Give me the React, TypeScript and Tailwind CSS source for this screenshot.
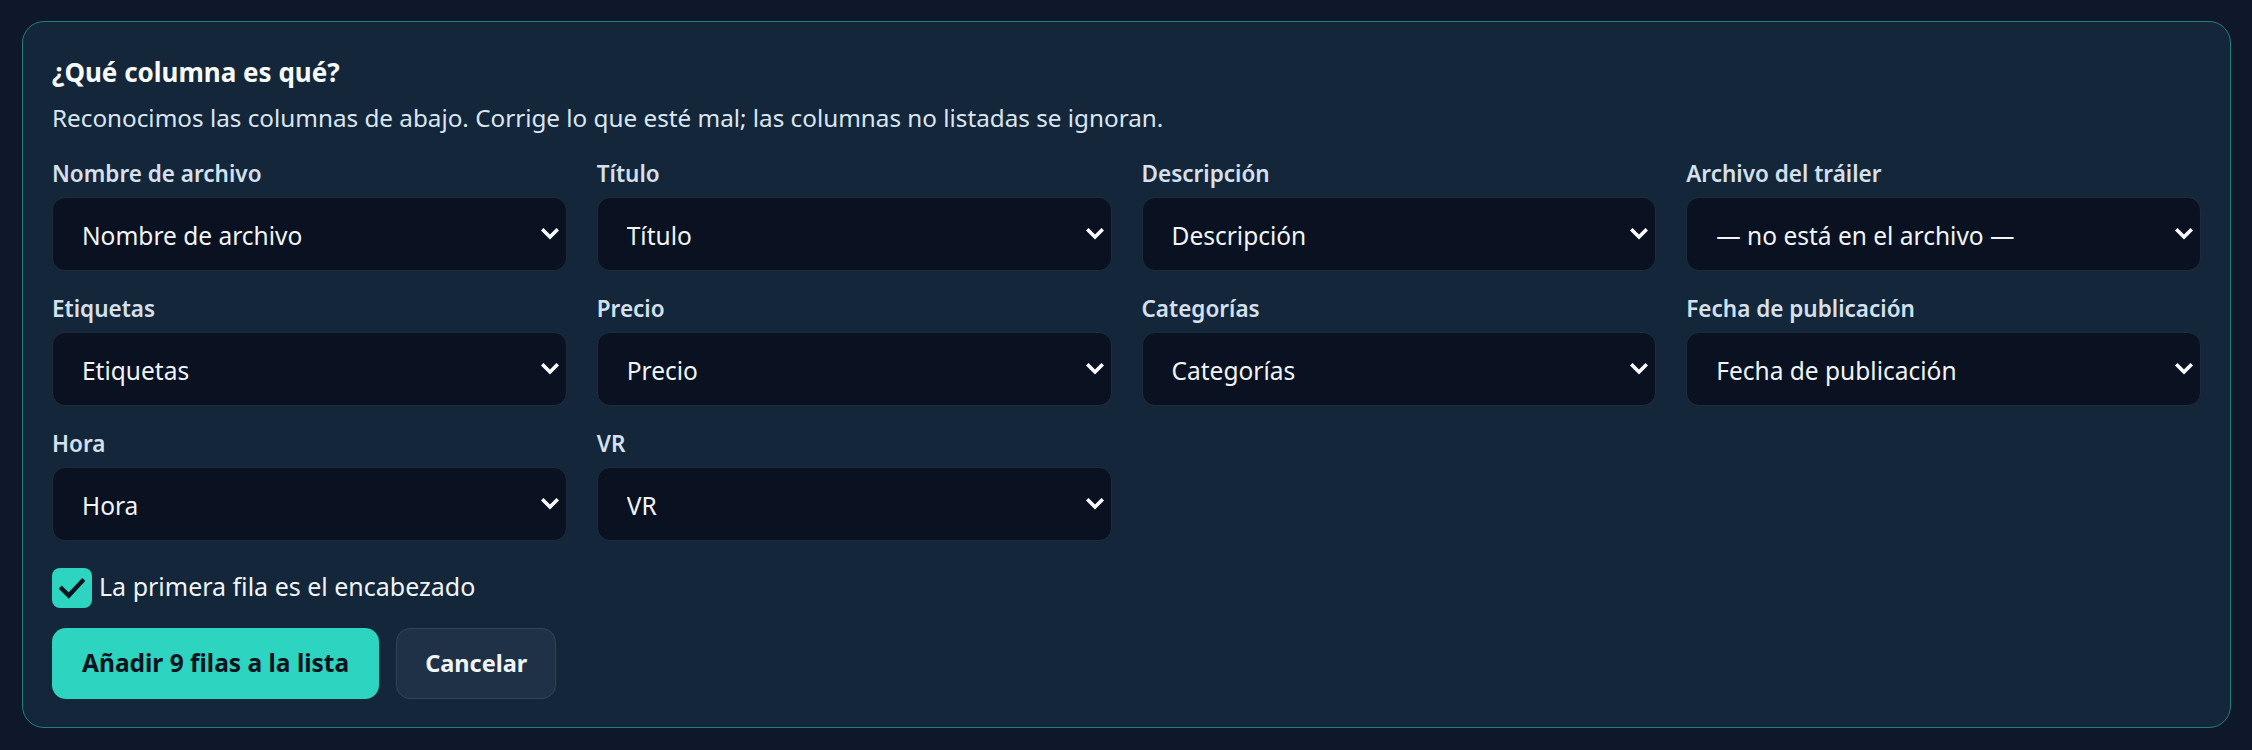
import { useState } from 'react'

const FIELDS = [
  { label: 'Nombre de archivo', value: 'Nombre de archivo' },
  { label: 'Título', value: 'Título' },
  { label: 'Descripción', value: 'Descripción' },
  { label: 'Archivo del tráiler', value: '— no está en el archivo —' },
  { label: 'Etiquetas', value: 'Etiquetas' },
  { label: 'Precio', value: 'Precio' },
  { label: 'Categorías', value: 'Categorías' },
  { label: 'Fecha de publicación', value: 'Fecha de publicación' },
  { label: 'Hora', value: 'Hora' },
  { label: 'VR', value: 'VR' },
]

const OPTIONS = [
  '— no está en el archivo —',
  'Nombre de archivo',
  'Título',
  'Descripción',
  'Etiquetas',
  'Precio',
  'Categorías',
  'Fecha de publicación',
  'Hora',
  'VR',
]

function Chevron() {
  return (
    <svg className="pointer-events-none absolute right-[8px] top-1/2 -translate-y-1/2 w-[18px] h-[12px]" viewBox="0 0 18 12" fill="none">
      <path d="M2.5 2.5 L9 9 L15.5 2.5" stroke="#f8fafc" strokeWidth="3.6" strokeLinecap="square" />
    </svg>
  )
}

function ColumnSelect({ label, value }: { label: string; value: string }) {
  const [v, setV] = useState(value)
  return (
    <label className="flex flex-col">
      <span className="text-[22.5px] leading-[28px] font-semibold text-[#d6e0ee]">{label}</span>
      <div className="relative mt-[9px]">
        <select
          value={v}
          onChange={(e) => setV(e.target.value)}
          className="w-full h-[74px] appearance-none rounded-[13px] border border-[#1f2b3d] bg-[#0a1120] pl-[29px] pr-[40px] pt-[5px] text-[24.5px] text-[#f1f5f9] outline-none"
        >
          {OPTIONS.map((o) => (
            <option key={o} value={o}>{o}</option>
          ))}
        </select>
        <Chevron />
      </div>
    </label>
  )
}

export default function App() {
  const [header, setHeader] = useState(true)

  return (
    <div className="min-h-screen bg-[#0f172b] pt-[21px] pl-[22px] pr-[21px] font-['Noto_Sans',sans-serif]">
      <div className="rounded-[22px] border border-[#21807c] bg-[#13263a] px-[29px] pt-[29px] pb-[28px]">
        <h2 className="text-[26px] leading-[42px] font-bold text-[#f8fafc]">¿Qué columna es qué?</h2>
        <p className="mt-[9px] text-[24.25px] leading-[32px] text-[#dce6f3]">
          Reconocimos las columnas de abajo. Corrige lo que esté mal; las columnas no listadas se ignoran.
        </p>

        <div className="mt-[26px] grid grid-cols-4 gap-x-[30px] gap-y-[24px]">
          {FIELDS.map((f) => (
            <ColumnSelect key={f.label} label={f.label} value={f.value} />
          ))}
        </div>

        <label className="mt-[27px] flex items-center gap-[7px] cursor-pointer w-fit">
          <button
            type="button"
            onClick={() => setHeader(!header)}
            className="w-[40px] h-[40px] rounded-[8px] bg-[#2dd4bf] flex items-center justify-center"
          >
            {header && (
              <svg viewBox="0 0 24 20" className="w-[26px] h-[22px]" fill="none">
                <path d="M2.5 10.5 L9 17 L21.5 3.5" stroke="#0b1220" strokeWidth="4" strokeLinecap="square" />
              </svg>
            )}
          </button>
          <span className="pb-[5px] text-[25px] leading-[32px] text-[#f1f5f9]">La primera fila es el encabezado</span>
        </label>

        <div className="mt-[20px] flex gap-[17px]">
          <button className="h-[71px] rounded-[14px] bg-[#2dd4bf] px-[30px] text-[24.5px] font-bold text-[#0b1220]">
            Añadir 9 filas a la lista
          </button>
          <button className="h-[71px] rounded-[14px] border border-[#334357] bg-[#1f3146] px-[28px] text-[23.5px] font-bold text-[#f1f5f9]">
            Cancelar
          </button>
        </div>
      </div>
    </div>
  )
}
